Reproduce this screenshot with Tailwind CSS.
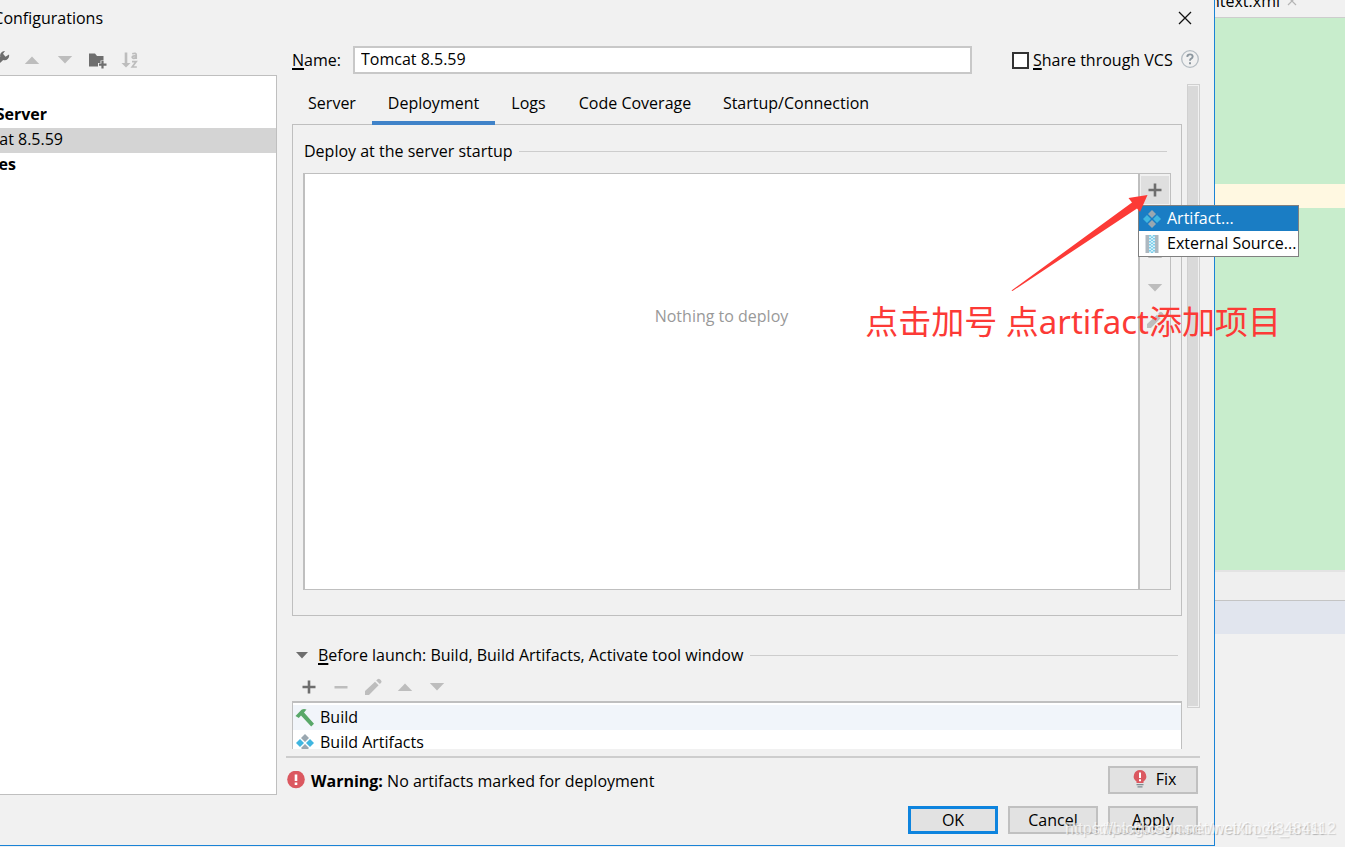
<!DOCTYPE html>
<html lang="en">
<head>
<meta charset="utf-8">
<title>Configurations</title>
<script src="https://cdn.jsdelivr.net/npm/@tailwindcss/browser@4"></script>
</head>
<body class="bg-[#f1f1f1] font-['Open_Sans','Noto_Sans_CJK_SC',sans-serif] text-[16px] leading-[25px] text-black">
<svg class="hidden" aria-hidden="true">
  <symbol id="plus" viewBox="0 0 20 20"><path fill="currentColor" d="M8.700 3.500h2.600v5.200h5.200v2.600h-5.200v5.200H8.700v-5.200H3.500V8.700h5.200z"/></symbol>
  <symbol id="minus" viewBox="0 0 20 20"><path fill="currentColor" d="M3.500 9h13v2.500h-13z"/></symbol>
  <symbol id="up" viewBox="0 0 20 20"><path fill="currentColor" d="M2.800 14h14.400L10 6.500z"/></symbol>
  <symbol id="down" viewBox="0 0 20 20"><path fill="currentColor" d="M2.800 6h14.400L10 13.500z"/></symbol>
  <symbol id="pencil" viewBox="0 0 20 20"><path fill="currentColor" d="M12 4.700l3.600 3.600L6 17.900H2v-4zM13.200 3.500l1.300-1.300q1.200-1 2.400 0l1.200 1.200q1 1.200 0 2.400l-1.300 1.300z"/></symbol>
  <symbol id="artifact" viewBox="0 0 20 20"><path fill="#9aa7b0" d="M10 1l4 4-4 4-4-4zM10 11l4 4-4 4-4-4z"/><path fill="#40b6e0" d="M5 6l4 4-4 4-4-4zM15 6l4 4-4 4-4-4z"/></symbol>
</svg>
<div class="relative flex min-h-screen items-stretch overflow-hidden">
  <main class="mb-px flex min-w-0 flex-1 flex-col border-r border-b border-[#1a83d6]">
    <header class="flex h-9 items-center justify-between pr-[21px]">
      <h1 class="flex w-[103px] justify-end overflow-hidden">Configurations</h1>
      <button type="button" aria-label="Close" class="flex size-4 items-center justify-center"><svg class="size-4" viewBox="0 0 16 16"><path d="M2 2l12 12M14 2L2 14" stroke="#111" stroke-width="1.300"/></svg></button>
    </header>

    <div class="flex flex-1">
      <aside class="flex w-[277px] shrink-0 flex-col">
        <div class="flex h-[39px] items-center overflow-hidden pt-[9px] text-[#bdbdbd]">
          <button type="button" aria-label="Edit templates" class="flex h-5 w-[22px] justify-start overflow-hidden"><svg class="h-5 w-3 text-[#6e6e6e]" viewBox="8 0 12 20"><path fill="currentColor" d="M17 4.500a4.500 4.500 0 0 1-5.800 5.400L4 17l-3-3 7.300-7.200A4.500 4.500 0 0 1 13 1l-2 2.700 2.500 3z"/></svg></button>
          <button type="button" aria-label="Move up"><svg class="size-5"><use href="#up"/></svg></button>
          <button type="button" aria-label="Move down" class="ml-[13px]"><svg class="size-5"><use href="#down"/></svg></button>
          <button type="button" aria-label="New folder" class="ml-3 text-[#6e6e6e]"><svg class="size-5" viewBox="0 0 20 20"><path fill="currentColor" d="M2 3.500h6l2 2.500h6.500v4.500h-3v2.500H11v3.500H2z"/><path d="M15.500 11v7.500M12 14.700h7.500" stroke="currentColor" stroke-width="2.200"/></svg></button>
          <button type="button" aria-label="Sort configurations" class="ml-[13px]"><svg class="size-5" viewBox="0 0 20 20"><path fill="currentColor" d="M4.700 2.500h2.600v10.500h3.200L6 17.500 1.500 13h3.200z"/><path fill="none" stroke="currentColor" stroke-width="1.700" d="M12.200 3.800q4-1.300 4 1v4.200M16.200 6q-4-.4-4 1.400 1 2 4-.2M12 11.600h4.200L12.200 17h4.600"/></svg></button>
        </div>
        <ul class="flex-1 border-y border-r border-[#bfbfbf] bg-white pt-[27px] leading-[23px]">
          <li class="h-[25px]"><b class="flex w-[47px] justify-end overflow-hidden">Server</b></li>
          <li class="h-[25px] bg-[#d4d4d4]"><span class="flex w-[63px] justify-end overflow-hidden whitespace-nowrap">cat 8.5.59</span></li>
          <li class="h-[25px]"><b class="flex w-4 justify-end overflow-hidden">es</b></li>
        </ul>
      </aside>

      <section class="flex min-w-0 flex-1 flex-col pr-[14px] pl-[15px]">
        <div class="mt-[10px] flex h-7 items-center">
          <label for="name" class="w-[61px]"><span class="underline decoration-2 underline-offset-2">N</span>ame:</label>
          <input id="name" type="text" value="Tomcat 8.5.59" class="h-7 min-w-0 flex-1 border-2 border-[#c8c8c8] bg-white px-1.5 pb-0.5 outline-none">
          <div class="ml-10 flex w-[188px] items-center">
            <input id="share" type="checkbox" class="size-[17px] shrink-0 appearance-none border-2 border-[#333] bg-white">
            <label for="share" class="ml-1 flex-1 whitespace-nowrap"><span class="underline decoration-2 underline-offset-2">S</span>hare through VCS</label>
            <button type="button" aria-label="Help"><svg class="size-5" viewBox="0 0 20 20"><circle cx="10" cy="9" r="8.300" fill="none" stroke="#b4bcc2" stroke-width="1.300"/><path fill="none" stroke="#8b969e" stroke-width="1.900" d="M7.200 6.800Q7.500 4.400 10 4.400t2.700 2.200Q12.700 8 11 8.800q-1 .6-1 1.900"/><path fill="#8b969e" d="M9 12.200h2v2H9z"/></svg></button>
          </div>
        </div>

        <div class="mt-[10px] flex flex-1 gap-[5px]">
          <div class="flex min-w-0 flex-1 flex-col">
            <nav class="flex h-[41px]" role="tablist">
              <button type="button" role="tab" class="w-20 pb-0.5">Server</button>
              <button type="button" role="tab" aria-selected="true" class="z-10 w-[123px] border-b-4 border-[#4083c9] pt-0.5">Deployment</button>
              <button type="button" role="tab" class="w-[67px] pb-0.5">Logs</button>
              <button type="button" role="tab" class="w-[146px] pb-0.5">Code Coverage</button>
              <button type="button" role="tab" class="w-[176px] pb-0.5">Startup/Connection</button>
            </nav>
            <div class="-mt-px flex flex-1 flex-col border border-[#bfbfbf] px-[10px] pt-[14px] pb-[25px]">
              <h2 class="flex items-center gap-1.5 pr-1 pl-px">Deploy at the server startup<span class="h-px flex-1 bg-[#cdcdcd]"></span></h2>
              <div class="mt-[9px] flex flex-1 border border-l-2 border-[#bfbfbf]">
                <div class="flex flex-1 justify-center bg-white pt-[130px] text-[#999]">Nothing to deploy</div>
                <div class="flex w-8 flex-col items-center border-l-2 border-[#bfbfbf] text-[#bdbdbd]">
                  <div class="relative mt-0.5">
                    <button type="button" aria-label="Add" class="flex size-7 items-center justify-center bg-[#dfdfdf] text-[#6e6e6e]"><svg class="size-5"><use href="#plus"/></svg></button>
                    <div role="menu" class="absolute top-[29px] -left-[3px] z-20 w-[161px] border border-[#808080] bg-white text-black">
                      <button type="button" role="menuitem" class="flex h-[25px] w-full items-center gap-[5px] bg-[#1a7dc4] pl-[3px] text-white"><svg class="size-5"><use href="#artifact"/></svg>Artifact...</button>
                      <button type="button" role="menuitem" class="flex h-[25px] w-full items-center gap-[5px] pl-[3px] whitespace-nowrap"><svg class="size-5 shrink-0" viewBox="0 0 20 20"><path fill="#adb8c0" d="M3.500 1H8v18H3.500zM12 1h4.500v18H12z"/><path fill="#d8f1fa" d="M7 1h6v18H7z"/><path fill="none" stroke="#40b6e0" stroke-width="1.200" stroke-dasharray="1.500 1.500" d="M8 1v18M12 1v18"/><path fill="none" stroke="#40b6e0" stroke-width="1.200" stroke-dasharray="1.500 1.500" stroke-dashoffset="1.500" d="M10 1v18"/></svg>External Source...</button>
                    </div>
                  </div>
                  <button type="button" aria-label="Remove" class="mt-2"><svg class="size-5"><use href="#minus"/></svg></button>
                  <button type="button" aria-label="Up" class="mt-3"><svg class="size-5"><use href="#up"/></svg></button>
                  <button type="button" aria-label="Down" class="mt-[14px]"><svg class="size-5"><use href="#down"/></svg></button>
                  <button type="button" aria-label="Edit" class="mt-3"><svg class="size-5"><use href="#pencil"/></svg></button>
                </div>
              </div>
            </div>
          </div>
          <div class="-mb-[92px] w-[13px] border border-[#d0d0d0] p-px pl-0"><div class="h-full w-[10px] bg-[#d9d9d9]"></div></div>
        </div>

        <div class="mt-[27px] mr-[18px]">
          <h2 class="flex items-center pr-1"><svg class="ml-[3px] h-5 w-[14px] text-[#6e6e6e]" viewBox="0 0 14 20"><path fill="currentColor" d="M1 6h12l-6 6.500z"/></svg><span class="ml-[9px] whitespace-nowrap"><span class="underline decoration-2 underline-offset-2">B</span>efore launch: Build, Build Artifacts, Activate tool window</span><span class="ml-[7px] h-px flex-1 bg-[#cdcdcd]"></span></h2>
          <div class="flex h-[33px] items-center gap-3 pt-1 pl-[7px] text-[#bdbdbd]">
            <button type="button" aria-label="Add task" class="text-[#6e6e6e]"><svg class="size-5"><use href="#plus"/></svg></button>
            <button type="button" aria-label="Remove task"><svg class="size-5"><use href="#minus"/></svg></button>
            <button type="button" aria-label="Edit task"><svg class="size-5"><use href="#pencil"/></svg></button>
            <button type="button" aria-label="Move task up"><svg class="size-5"><use href="#up"/></svg></button>
            <button type="button" aria-label="Move task down"><svg class="size-5"><use href="#down"/></svg></button>
          </div>
          <ul class="h-12 overflow-hidden border-x border-t-2 border-[#bfbfbf] bg-white pt-0.5">
            <li class="flex h-[25px] items-center gap-[5px] bg-[#f1f5fa] pl-0.5"><svg class="size-5" viewBox="0 0 20 20"><path fill="#59a869" d="M0.500 8L6.500 1.800Q8.500.6 11.500 1.500L9 4.500l10 11.200-2.800 2.800L6 7.500 3.800 10z"/></svg>Build</li>
            <li class="flex h-[25px] items-center gap-[5px] pl-0.5"><svg class="size-5"><use href="#artifact"/></svg>Build Artifacts</li>
          </ul>
        </div>

        <div class="mt-[7px] -ml-1.5 border-t-2 border-[#cdcdcd] pt-2 pb-px">
          <div class="flex items-center justify-between pr-0.5">
            <p class="flex items-center gap-[5px] pt-0.5"><svg class="size-5" viewBox="0 0 20 20"><circle cx="10" cy="8.500" r="8.800" fill="#db5860"/><path fill="#fff" d="M8.700 3.500h2.600V10H8.700zM8.700 11.500h2.600V14H8.700z"/></svg><span><b>Warning:</b> No artifacts marked for deployment</span></p>
            <button type="button" class="flex h-7 w-[90px] items-center justify-center gap-1.5 border-2 border-[#c0c0c0] bg-[#e2e2e2] pb-0.5"><svg class="size-5" viewBox="0 0 20 20"><path fill="#db5860" d="M10 1a6.300 6.300 0 0 0-3.500 11.500V14h7v-1.500A6.300 6.300 0 0 0 10 1z"/><path fill="#fff" d="M9 3.500h2v5.500H9zM9 10.200h2v2H9z"/><path fill="#7f8b91" d="M6.500 15h7v1.300h-7zM7.500 17.300h5v1.300h-5z"/></svg>Fix</button>
          </div>
        </div>
      </section>
    </div>

    <footer class="flex justify-end gap-[10px] pt-[11px] pr-4 pb-[11px]">
      <button type="button" class="h-7 w-[90px] border-[3px] border-[#0e84de] bg-[#e2e2e2] leading-5">OK</button>
      <button type="button" class="h-7 w-[90px] border-2 border-[#c0c0c0] bg-[#e2e2e2] leading-5">Cancel</button>
      <button type="button" class="h-7 w-[90px] border-2 border-[#c0c0c0] bg-[#e2e2e2] leading-5"><span class="underline decoration-2 underline-offset-2">A</span>pply</button>
    </footer>
  </main>

  <aside class="flex w-[130px] shrink-0 flex-col">
    <div class="flex h-[18px] items-end gap-1.5 overflow-hidden border-b border-[#cdcdcd]">
      <span class="flex w-[65px] justify-end overflow-hidden pb-[3px]">ntext.xml</span>
      <button type="button" aria-label="Close tab" class="pb-2.5"><svg class="size-3" viewBox="0 0 12 12"><path d="M2 2l8 8M10 2l-8 8" stroke="#b5b5b5" stroke-width="1.200"/></svg></button>
    </div>
    <div class="flex-1 border-b-2 border-[#e3e3e3] bg-[#c8edcc] pt-[166px]"><div class="h-6 bg-[#fff8e1]"></div></div>
    <div class="h-7 bg-[#efefef]"></div>
    <div class="mb-[213px] h-[34px] border-t border-[#c4c4c4] bg-[#e1e5ee]"></div>
  </aside>

  <svg class="pointer-events-none absolute top-[190px] right-[195px] z-30 h-[104px] w-[140px]" viewBox="0 0 140 104"><path fill="#fc3a36" d="M1.500 100.500L122 12.500 118.500 8 137.500 5 130 22 127 18.500 2.500 101z"/></svg>
  <p class="pointer-events-none absolute top-[297px] right-[64px] z-30 font-['Noto_Sans','Noto_Sans_CJK_SC',sans-serif] text-[33px] leading-[50px] whitespace-nowrap text-[#fc3a36]">点击加号 点artifact添加项目</p>
  <p class="pointer-events-none absolute right-[22px] bottom-1.5 z-30 font-['Liberation_Sans',sans-serif] text-[16px] whitespace-nowrap text-white/70 [text-shadow:1px_1px_1px_rgba(0,0,0,0.15)]">https://blog.csdn.net/Code_artist</p>
  <p class="pointer-events-none absolute right-[9px] bottom-1.5 z-30 font-['Liberation_Sans',sans-serif] text-[16px] whitespace-nowrap text-white/70 [text-shadow:1px_1px_1px_rgba(0,0,0,0.15)]">https://blog.csdn.net/weixin_43484112</p>
</div>
</body>
</html>
